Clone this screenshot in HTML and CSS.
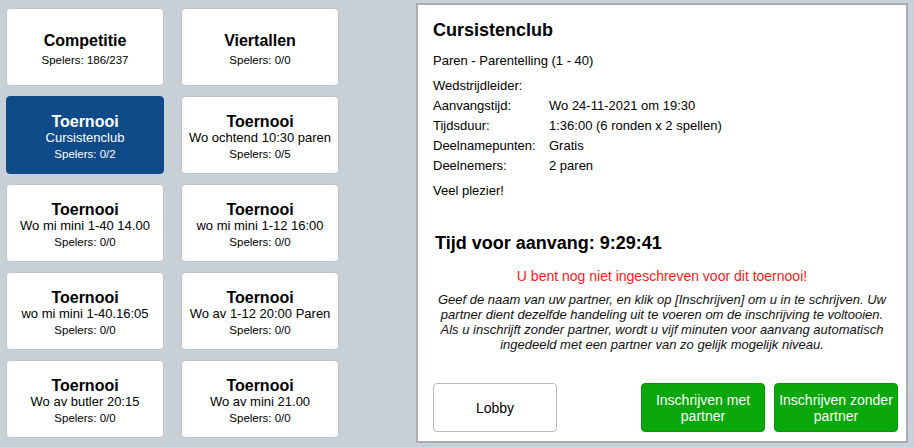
FILE: index.html
```html
<!DOCTYPE html>
<html lang="nl">
<head>
    <meta charset="UTF-8">
    <meta name="viewport" content="width=device-width, initial-scale=1.0">
    <title>Lobby - Toernooien</title>
    <link rel="stylesheet" href="styles.css">
</head>
<body>
    <div class="page">
        <div class="tiles">
            <div class="tile tile-short">
                <div class="tile-title">Competitie</div>
                <div class="tile-players">Spelers: 186/237</div>
            </div>
            <div class="tile tile-short">
                <div class="tile-title">Viertallen</div>
                <div class="tile-players">Spelers: 0/0</div>
            </div>
            <div class="tile selected">
                <div class="tile-title">Toernooi</div>
                <div class="tile-name">Cursistenclub</div>
                <div class="tile-players">Spelers: 0/2</div>
            </div>
            <div class="tile">
                <div class="tile-title">Toernooi</div>
                <div class="tile-name">Wo ochtend 10:30 paren</div>
                <div class="tile-players">Spelers: 0/5</div>
            </div>
            <div class="tile">
                <div class="tile-title">Toernooi</div>
                <div class="tile-name">Wo mi mini 1-40 14.00</div>
                <div class="tile-players">Spelers: 0/0</div>
            </div>
            <div class="tile">
                <div class="tile-title">Toernooi</div>
                <div class="tile-name">wo mi mini 1-12 16:00</div>
                <div class="tile-players">Spelers: 0/0</div>
            </div>
            <div class="tile">
                <div class="tile-title">Toernooi</div>
                <div class="tile-name">wo mi mini 1-40.16:05</div>
                <div class="tile-players">Spelers: 0/0</div>
            </div>
            <div class="tile">
                <div class="tile-title">Toernooi</div>
                <div class="tile-name">Wo av 1-12 20:00 Paren</div>
                <div class="tile-players">Spelers: 0/0</div>
            </div>
            <div class="tile">
                <div class="tile-title">Toernooi</div>
                <div class="tile-name">Wo av butler 20:15</div>
                <div class="tile-players">Spelers: 0/0</div>
            </div>
            <div class="tile">
                <div class="tile-title">Toernooi</div>
                <div class="tile-name">Wo av mini 21.00</div>
                <div class="tile-players">Spelers: 0/0</div>
            </div>
        </div>

        <div class="details">
            <h2 class="details-title">Cursistenclub</h2>
            <div class="details-type">Paren - Parentelling (1 - 40)</div>
            <div class="info">
                <div class="info-label">Wedstrijdleider:</div>
                <div class="info-value"></div>
                <div class="info-label">Aanvangstijd:</div>
                <div class="info-value">Wo 24-11-2021 om 19:30</div>
                <div class="info-label">Tijdsduur:</div>
                <div class="info-value">1:36:00 (6 ronden x 2 spellen)</div>
                <div class="info-label">Deelnamepunten:</div>
                <div class="info-value">Gratis</div>
                <div class="info-label">Deelnemers:</div>
                <div class="info-value">2 paren</div>
            </div>
            <div class="details-note">Veel plezier!</div>

            <div class="countdown">Tijd voor aanvang: 9:29:41</div>
            <div class="warning">U bent nog niet ingeschreven voor dit toernooi!</div>
            <p class="help">Geef de naam van uw partner, en klik op [Inschrijven] om u in te schrijven. Uw partner dient dezelfde handeling uit te voeren om de inschrijving te voltooien. Als u inschrijft zonder partner, wordt u vijf minuten voor aanvang automatisch ingedeeld met een partner van zo gelijk mogelijk niveau.</p>

            <div class="actions">
                <button class="btn btn-lobby">Lobby</button>
                <div class="actions-right">
                    <button class="btn btn-green">Inschrijven met partner</button>
                    <button class="btn btn-green">Inschrijven zonder partner</button>
                </div>
            </div>
        </div>
    </div>
</body>
</html>
```

FILE: styles.css
```css
body {
    margin: 0;
    padding: 0;
    background-color: #c8d0d8;
    font-family: Arial, "Liberation Sans", sans-serif;
    color: #000;
    overflow: hidden;
}

.page {
    display: flex;
    align-items: flex-start;
}

/* tournament tiles */
.tiles {
    display: grid;
    grid-template-columns: 158px 158px;
    grid-auto-rows: 78px;
    column-gap: 17px;
    row-gap: 10px;
    padding: 8px 0 0 6px;
    width: 333px;
    margin-right: 77px;
}

.tile {
    box-sizing: border-box;
    background-color: #fff;
    border: 1px solid #bfc5cb;
    border-radius: 4px;
    display: flex;
    flex-direction: column;
    align-items: center;
    justify-content: center;
    padding-top: 6px;
    text-align: center;
    white-space: nowrap;
}

.tile.selected {
    background-color: #0f4b89;
    border-color: #0f4b89;
    color: #fff;
}

.tile-title {
    font-size: 16px;
    font-weight: bold;
    line-height: 16px;
}

.tile-name {
    font-size: 13px;
    line-height: 16px;
}

.tile-players {
    font-size: 11.5px;
    line-height: 16px;
}

.tile-short .tile-players {
    margin-top: 3px;
}

/* details panel */
.details {
    box-sizing: border-box;
    width: 492px;
    height: 440px;
    margin-top: 3px;
    background-color: #fff;
    border: 2px solid #a9adb1;
    padding: 14px 15px 9px 15px;
    display: flex;
    flex-direction: column;
}

.details-title {
    margin: 0;
    font-size: 18px;
    line-height: 22px;
}

.details-type {
    margin-top: 12px;
    font-size: 13px;
    line-height: 16px;
}

.info {
    margin-top: 7px;
    display: grid;
    grid-template-columns: 116px 1fr;
    font-size: 13px;
    line-height: 20px;
}

.details-note {
    margin-top: 7px;
    font-size: 13px;
    line-height: 16px;
}

.countdown {
    margin: 33px 0 0 2px;
    font-size: 18px;
    font-weight: bold;
    line-height: 22px;
}

.warning {
    margin-top: 13px;
    text-align: center;
    color: #ff1a1a;
    font-size: 14px;
    line-height: 18px;
}

.help {
    margin: 7px 0 0 0;
    text-align: center;
    font-style: italic;
    font-size: 13px;
    line-height: 15px;
    color: #111;
}

.actions {
    margin-top: auto;
    margin-right: -7px;
    display: flex;
    justify-content: space-between;
}

.actions-right {
    display: flex;
    gap: 9px;
}

.btn {
    box-sizing: border-box;
    width: 124px;
    height: 49px;
    border-radius: 4px;
    font-family: Arial, "Liberation Sans", sans-serif;
    font-size: 14px;
    line-height: 16px;
    padding: 0 2px;
    cursor: pointer;
}

.btn-lobby {
    background-color: #fff;
    border: 1px solid #b9b9b9;
    color: #000;
}

.btn-green {
    background-color: #09a709;
    border: 1px solid #0b950b;
    color: #fff;
}
```
